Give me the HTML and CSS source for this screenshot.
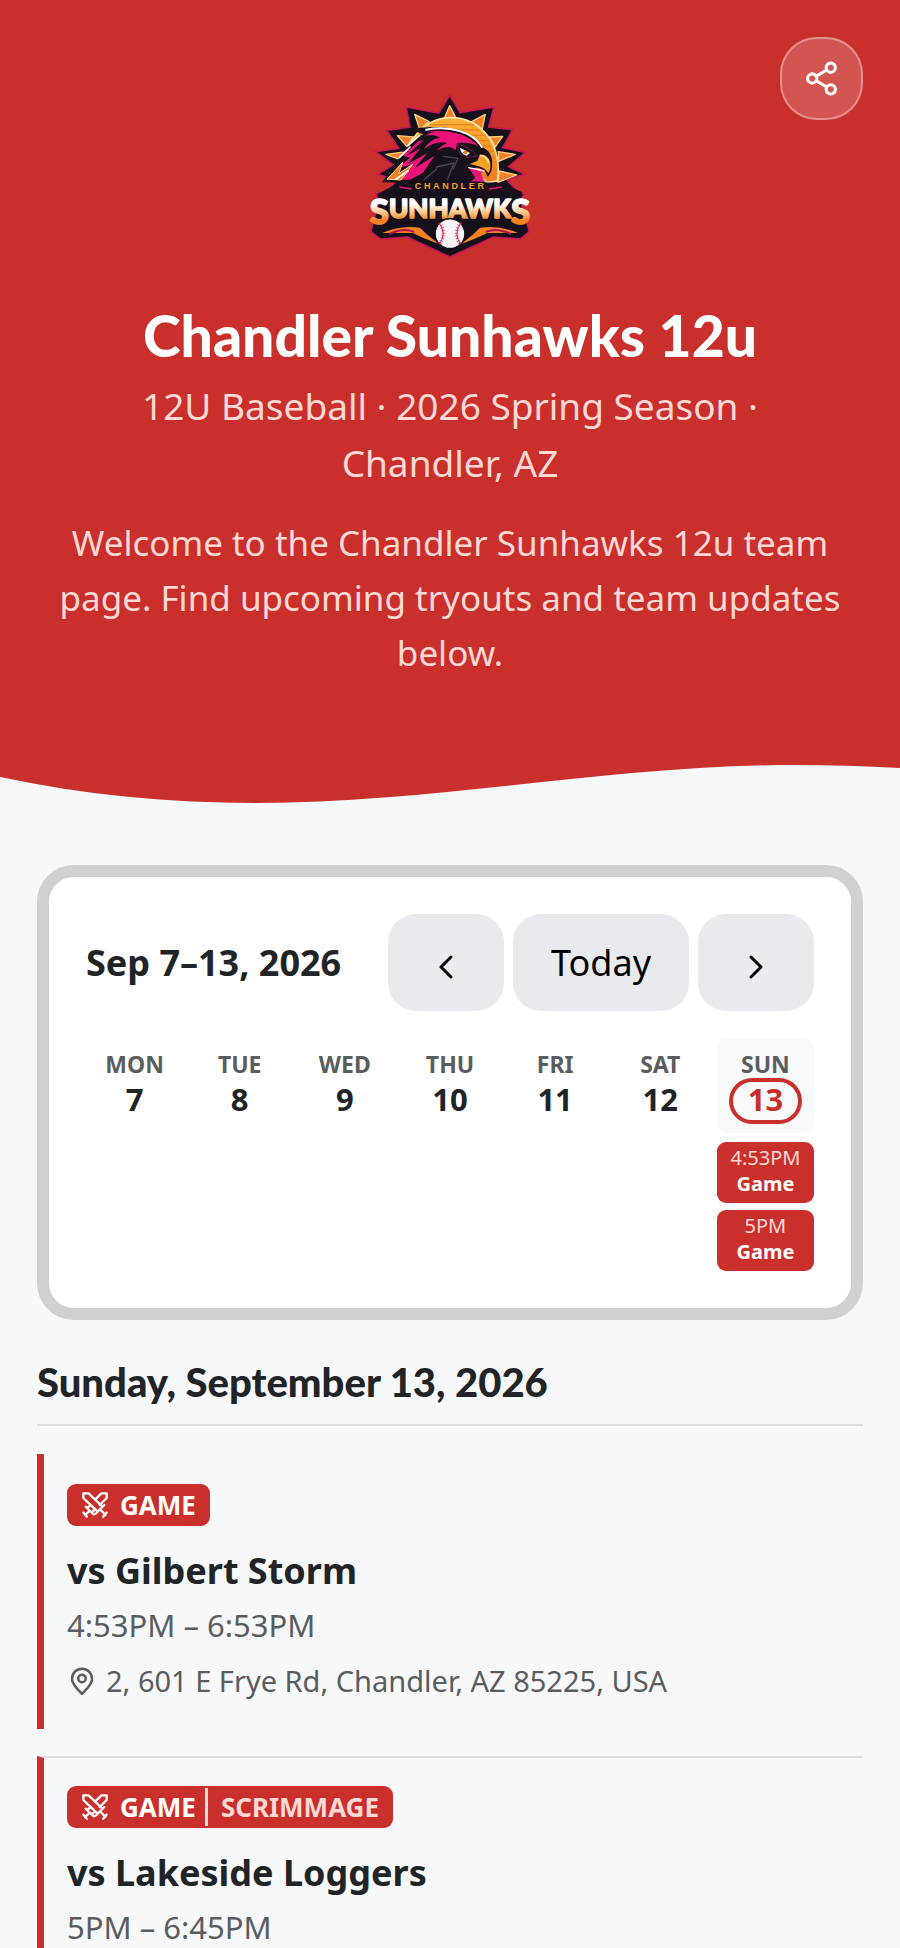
FILE: index.html
```html
<!DOCTYPE html>
<html lang="en">
<head>
    <meta charset="UTF-8">
    <meta name="viewport" content="width=device-width, initial-scale=1.0">
    <title>Chandler Sunhawks 12u</title>
    <link rel="stylesheet" href="styles.css">
</head>
<body>
    <svg class="sprite" aria-hidden="true">
        <symbol id="icon-swords" viewBox="0 0 24 24">
            <path d="M2 6V2H6.500L18.500 13.500M2 6L14 17.500M20 12L12.500 19.500M17 16.500L21 20.500M22 18.500L19 22"/>
            <path d="M12.500 7L17.500 2H22V6L16 12M4 13.500L11 20M5.500 14.500L8 12.300M9.500 18L12 15.700M7.500 17L3.500 20.500M2 18.500L5 22"/>
        </symbol>
        <symbol id="icon-pin" viewBox="0 0 24 24">
            <path d="M20 10.200c0 4.800-4.400 8.200-8 12.200-3.600-4-8-7.400-8-12.200a8 8 0 0 1 16 0z"/>
            <circle cx="12" cy="10" r="3"/>
        </symbol>
    </svg>

    <header class="hero">
        <button class="share-btn" type="button" aria-label="Share">
            <svg viewBox="0 0 24 24" aria-hidden="true">
                <circle cx="6" cy="12" r="3"/>
                <circle cx="18" cy="5" r="3"/>
                <circle cx="18" cy="19" r="3"/>
                <path d="M8.600 10.500l6.800-4M8.600 13.500l6.800 4"/>
            </svg>
        </button>

        <svg class="logo" viewBox="0 0 540 540" role="img" aria-label="Chandler Sunhawks logo">
            <defs>
                <linearGradient id="word" x1="0" y1="0" x2="0" y2="1">
                    <stop offset="0.35" stop-color="#fff"/>
                    <stop offset="0.55" stop-color="#ffc98a"/>
                    <stop offset="0.75" stop-color="#f58220"/>
                </linearGradient>
                <linearGradient id="sun" x1="0" y1="0" x2="0" y2="1">
                    <stop offset="0" stop-color="#fbb034"/>
                    <stop offset="1" stop-color="#ee7a1c"/>
                </linearGradient>
            </defs>
            <!-- badge outline -->
            <path class="logo-base" d="M269 30L300 83L402 66L386 126L458 134L428 188L496 202L446 245L494 268L440 284L472 318L492 326L482 350L508 440L482 462L400 456L270 516L142 456L60 462L32 440L56 350L48 326L84 318L110 284L52 268L100 240L46 200L116 190L80 136L150 126L138 66L236 84Z"/>
            <!-- sun and rays -->
            <g class="logo-rays">
                <path d="M269 62L290 103Q270 96 252 102Z"/>
                <path d="M164 88L208 110Q190 122 180 136Z"/>
                <path d="M376 88L366 136Q354 120 335 110Z"/>
                <path d="M112 152L160 156Q148 170 144 188Z"/>
                <path d="M428 154L404 188Q400 170 388 156Z"/>
                <path d="M78 208L140 200L126 226Z"/>
                <path d="M466 208L414 230Q418 214 414 200Z"/>
                <path d="M470 270L414 292L418 258Z"/>
            </g>
            <path d="M142 280C116 180 190 98 270 98C362 98 428 176 412 288L380 292L330 240Z" fill="url(#sun)" stroke="#ffe2a6" stroke-width="5"/>
            <path class="logo-lines" d="M210 119H340M190 135H358M320 151H374M340 167H386M356 183H394M370 199H400M382 215H404M388 231H406M392 247H408"/>
            <!-- hawk -->
            <path d="M150 134C210 120 330 118 372 190C396 202 404 232 388 258C376 240 350 248 322 254L342 292H66L96 252L76 268L118 218L146 196L126 202L170 158L190 148Z" fill="#15101a"/>
            <path class="logo-feathers" d="M200 138C270 134 322 146 356 184C336 172 310 172 292 174L286 196C270 180 250 186 230 198C240 184 252 178 262 174C236 168 214 176 192 192C204 172 222 160 240 158C226 150 212 150 196 152C206 144 216 142 224 140Z"/>
            <path class="logo-feathers" d="M190 166L138 214L182 190L142 238L202 204L164 250L224 212L188 264L150 284H104L150 240L112 250L150 218L128 212L176 168Z"/>
            <path d="M198 134C270 120 340 142 366 186" fill="none" stroke="#fff" stroke-width="6"/>
            <path d="M82 282L128 232L116 266L158 238L124 284Z" fill="#f58220" stroke="#ffd9a0" stroke-width="3"/>
            <path d="M150 186L118 218M178 152L144 182M144 258L108 282" stroke="#fff" stroke-width="5"/>
            <path d="M230 246L282 234L262 284M250 214L294 220L280 252M192 284L230 252" fill="none" stroke="#4b4350" stroke-width="4"/>
            <path d="M292 180C310 178 336 194 352 212L324 218C304 214 294 200 292 180Z" fill="#15101a" stroke="#77204d" stroke-width="3"/>
            <path d="M300 188L330 204L320 212Q302 208 300 188Z" fill="#fff"/>
            <circle cx="316" cy="202" r="6" fill="#ed7b1c"/>
            <path d="M358 206C382 204 400 224 392 256L384 272C378 248 350 244 322 238L350 226Z" fill="#f9a01f" stroke="#15101a" stroke-width="5"/>
            <path d="M362 212Q378 212 386 232" fill="none" stroke="#ffe49a" stroke-width="5"/>
            <path d="M326 248L376 256L362 264L374 290H332L346 278Z" fill="#ec1277"/>
            <path d="M326 248L372 258" stroke="#fff" stroke-width="4"/>
            <!-- name band -->
            <path d="M110 296Q270 280 434 296L486 322L480 352L496 436L466 450L388 424L270 496L154 424L74 450L44 436L62 352L54 326Z" fill="#15101a"/>
            <path d="M66 444Q120 420 180 428L200 448L238 478L192 460L158 444Z" fill="#f58220"/>
            <path d="M474 444Q420 420 360 428L340 448L302 478L348 460L382 444Z" fill="#f58220"/>
            <path d="M90 446Q130 428 160 440M450 446Q410 428 380 440" stroke="#b40e5b" stroke-width="6" fill="none"/>
            <path d="M120 306L154 312M388 312L424 306" stroke="#ec1277" stroke-width="4"/>
            <text class="logo-city" x="272" y="313">CHANDLER</text>
            <text class="logo-name" x="270" y="416"><tspan class="logo-cap">S</tspan><tspan dy="-18">UNHAWK</tspan><tspan class="logo-cap" dy="18">S</tspan></text>
            <!-- baseball -->
            <circle cx="270" cy="446" r="45" fill="#f8f4f5" stroke="#15101a" stroke-width="5"/>
            <path d="M238 414Q262 446 238 478M302 414Q278 446 302 478" fill="none" stroke="#d01f56" stroke-width="3"/>
            <path d="M238 414Q262 446 238 478M302 414Q278 446 302 478" class="logo-stitches"/>
        </svg>

        <h1>Chandler Sunhawks 12u</h1>
        <p class="team-meta">12U Baseball · 2026 Spring Season · Chandler, AZ</p>
        <p class="welcome">Welcome to the Chandler Sunhawks 12u team page. Find upcoming tryouts and team updates below.</p>
    </header>
    <svg class="wave" viewBox="0 0 900 40" preserveAspectRatio="none" aria-hidden="true">
        <path d="M0 0V12C85 30 170 38 255 38C440 38 610 0 795 0C830 0 865 1 900 3V0Z"/>
    </svg>

    <main>
        <section class="calendar" aria-label="Week calendar">
            <div class="calendar-bar">
                <h2>Sep 7–13, 2026</h2>
                <div class="calendar-nav">
                    <button class="nav-btn" type="button" aria-label="Previous week">
                        <svg viewBox="0 0 14 24" aria-hidden="true"><path d="M12 2L2 12l10 10"/></svg>
                    </button>
                    <button class="nav-btn" type="button">Today</button>
                    <button class="nav-btn" type="button" aria-label="Next week">
                        <svg viewBox="0 0 14 24" aria-hidden="true"><path d="M2 2l10 10L2 22"/></svg>
                    </button>
                </div>
            </div>
            <div class="week">
                <div class="day"><div class="day-head"><span>MON</span><strong>7</strong></div></div>
                <div class="day"><div class="day-head"><span>TUE</span><strong>8</strong></div></div>
                <div class="day"><div class="day-head"><span>WED</span><strong>9</strong></div></div>
                <div class="day"><div class="day-head"><span>THU</span><strong>10</strong></div></div>
                <div class="day"><div class="day-head"><span>FRI</span><strong>11</strong></div></div>
                <div class="day"><div class="day-head"><span>SAT</span><strong>12</strong></div></div>
                <div class="day today">
                    <div class="day-head"><span>SUN</span><strong>13</strong></div>
                    <a class="chip" href="#game-1"><span>4:53PM</span><strong>Game</strong></a>
                    <a class="chip" href="#game-2"><span>5PM</span><strong>Game</strong></a>
                </div>
            </div>
        </section>

        <section class="agenda">
            <h2>Sunday, September 13, 2026</h2>
            <article class="event" id="game-1">
                <div class="badge">
                    <svg class="swords" aria-hidden="true"><use href="#icon-swords"/></svg>
                    <span>GAME</span>
                </div>
                <h3>vs Gilbert Storm</h3>
                <p class="time">4:53PM – 6:53PM</p>
                <p class="place">
                    <svg class="pin" aria-hidden="true"><use href="#icon-pin"/></svg>
                    <span>2, 601 E Frye Rd, Chandler, AZ 85225, USA</span>
                </p>
            </article>
            <article class="event" id="game-2">
                <div class="badge">
                    <svg class="swords" aria-hidden="true"><use href="#icon-swords"/></svg>
                    <span>GAME</span>
                    <span class="badge-sub">SCRIMMAGE</span>
                </div>
                <h3>vs Lakeside Loggers</h3>
                <p class="time">5PM – 6:45PM</p>
            </article>
        </section>
    </main>
</body>
</html>
```

FILE: styles.css
```css
* {
    box-sizing: border-box;
}
body {
    font-family: 'Noto Sans', sans-serif;
    color: #212427;
    background-color: #f6f8fa;
    margin: 0;
}
h1, h2, h3, p {
    margin: 0;
}
svg {
    display: block;
    fill: none;
    stroke-linecap: round;
    stroke-linejoin: round;
}
.sprite {
    display: none;
}

/* Header */
.hero {
    position: relative;
    padding: 85px 37px;
    background-color: #ca302b;
    color: #fff;
    text-align: center;
}
.share-btn {
    position: absolute;
    top: 37px;
    right: 37px;
    display: flex;
    align-items: center;
    justify-content: center;
    width: 83px;
    height: 83px;
    padding: 0;
    background-color: rgba(255,255,255,0.18);
    border: 2px solid rgba(255,255,255,0.35);
    border-radius: 37px;
    cursor: pointer;
}
.share-btn svg {
    width: 37px;
    height: 37px;
    stroke: #fff;
    stroke-width: 2;
}
.logo {
    width: 180px;
    height: 180px;
    margin: 0 auto 37px;
}
.logo-base {
    fill: #15101a;
    stroke: #c8175d;
    stroke-width: 5;
    stroke-linejoin: miter;
}
.logo-rays {
    fill: #f0802a;
    stroke: #ffd27f;
    stroke-width: 4;
}
.logo-lines {
    stroke: #e8861e;
    stroke-width: 4;
}
.logo-feathers {
    fill: #ec1277;
}
.logo-city {
    font: bold 27px 'Liberation Sans', sans-serif;
    letter-spacing: 8px;
    text-anchor: middle;
    fill: #f9a01f;
}
.logo-name {
    font: 900 78px Lato, sans-serif;
    text-anchor: middle;
    fill: url(#word);
    stroke: url(#word);
    stroke-width: 5;
}
.logo-cap {
    font-size: 104px;
}
.logo-stitches {
    stroke: #d01f56;
    stroke-width: 11;
    stroke-linecap: butt;
    stroke-dasharray: 2 6;
}
.hero h1 {
    font-family: Lato, sans-serif;
    font-size: 57px;
    font-weight: 900;
    line-height: 67px;
}
.team-meta {
    padding: 0 37px;
    margin-top: 8px;
    font-size: 37px;
    line-height: 57px;
    color: #ffd9d6;
}
.welcome {
    margin-top: 24px;
    font-size: 35px;
    line-height: 55px;
    color: #ffd9d6;
}
.wave {
    width: 100%;
    height: 40px;
}
.wave path {
    fill: #ca302b;
}

main {
    padding: 60px 37px 0;
}

/* Week calendar */
.calendar {
    padding: 37px;
    background-color: #fff;
    border: 12px solid #d0d0d0;
    border-radius: 37px;
}
.calendar-bar {
    display: flex;
    align-items: center;
    justify-content: space-between;
}
.calendar-bar h2 {
    font-size: 36px;
    line-height: 48px;
}
.calendar-nav {
    display: flex;
    gap: 9px;
}
.nav-btn {
    min-width: 116px;
    height: 97px;
    padding: 0 38px;
    font-family: inherit;
    font-size: 36px;
    color: #000;
    background-color: #e9eaed;
    border: none;
    border-radius: 28px;
    cursor: pointer;
}
.nav-btn svg {
    width: 14px;
    height: 24px;
    margin: 8px auto 0;
    stroke: #000;
    stroke-width: 3;
}
.week {
    display: grid;
    grid-template-columns: repeat(7, 1fr);
    gap: 8px;
    margin-top: 27px;
}
.day-head {
    display: flex;
    flex-direction: column;
    align-items: center;
    height: 95px;
    padding-top: 12px;
    margin-bottom: 9px;
    border-radius: 9px;
}
.day-head span {
    font-size: 23px;
    font-weight: 700;
    line-height: 28px;
    color: #5a5d60;
}
.day-head strong {
    padding: 0 15px 4px;
    font-size: 31px;
    line-height: 34px;
    border: 4px solid transparent;
    border-radius: 23px;
}
.today .day-head {
    background-color: #f8f9fa;
}
.today .day-head strong {
    color: #ca302b;
    border-color: #ca302b;
}
.chip {
    display: block;
    padding: 3px 0 6px;
    margin-top: 7px;
    font-size: 20px;
    line-height: 26px;
    text-align: center;
    text-decoration: none;
    color: #fff;
    background-color: #ca302b;
    border-radius: 9px;
}
.chip span {
    display: block;
    color: #ffd9d6;
}
.chip strong {
    display: block;
}

/* Agenda */
.agenda h2 {
    padding: 36px 0 16px;
    margin-bottom: 28px;
    font-family: Lato, sans-serif;
    font-size: 40px;
    font-weight: 900;
    line-height: 52px;
    border-bottom: 2px solid #dddfe1;
}
.event {
    padding: 30px 0 24px 23px;
    border-left: 7px solid #ca302b;
}
.event + .event {
    margin-top: 27px;
    padding-top: 28px;
    padding-bottom: 0;
    border-top: 2px solid #dddfe1;
}
.badge {
    display: flex;
    align-items: center;
    width: fit-content;
    height: 42px;
    padding: 0 14px;
    font-size: 26px;
    font-weight: 700;
    color: #fff;
    background-color: #ca302b;
    border-radius: 9px;
}
.swords {
    width: 28px;
    height: 28px;
    margin-right: 11px;
    stroke: #fff;
    stroke-width: 2;
}
.badge-sub {
    padding-left: 13px;
    margin-left: 9px;
    line-height: 38px;
    color: #ffd9d6;
    border-left: 3px solid #ffd9d6;
}
.event h3 {
    margin-top: 20px;
    font-size: 36px;
    line-height: 50px;
}
.time {
    margin-top: 5px;
    font-size: 31px;
    line-height: 48px;
    color: #5a5d60;
}
.place {
    display: flex;
    align-items: center;
    gap: 9px;
    margin-top: 8px;
    font-size: 29px;
    line-height: 48px;
    color: #5a5d60;
}
.pin {
    width: 30px;
    height: 30px;
    stroke: #5a5d60;
    stroke-width: 2;
}
```
